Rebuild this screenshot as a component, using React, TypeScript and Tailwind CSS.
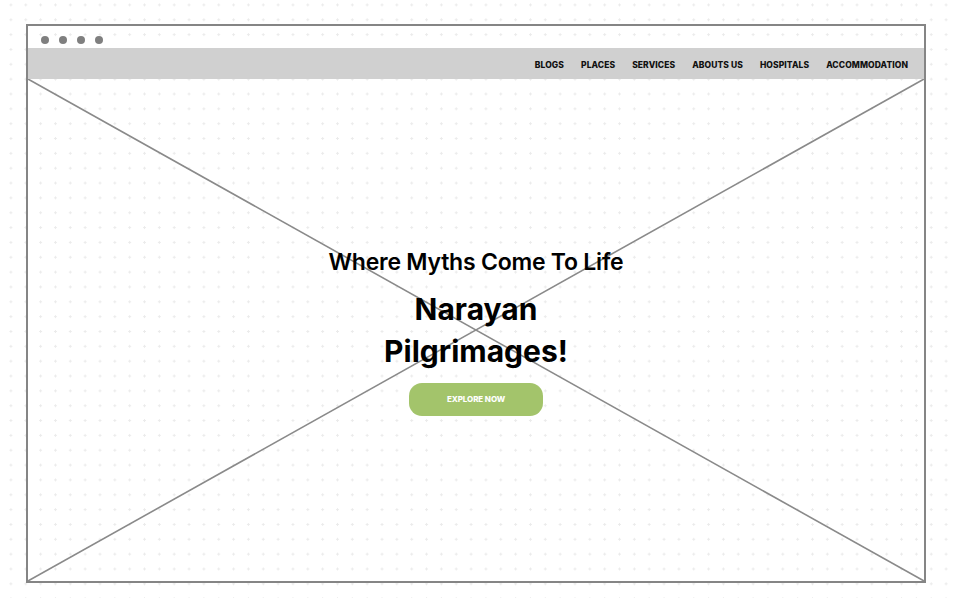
const navItems = ["Blogs", "Places", "Services", "Abouts Us", "Hospitals", "Accommodation"];

export default function App() {
  return (
    <div className="min-h-screen w-full bg-white bg-[radial-gradient(circle,#ebebeb_1px,transparent_1.3px)] bg-[size:14.85px_14.85px] bg-[position:3.5px_-2.5px] pt-[24px] pl-[26px] font-['Inter',sans-serif]">
      <div className="flex h-[559px] w-[900px] flex-col border-2 border-[#858585]">
        {/* window dots */}
        <div className="flex h-[22px] items-start gap-[10px] pl-[13px] pt-[10px]">
          {[0, 1, 2, 3].map((i) => (
            <span key={i} className="h-[8px] w-[8px] rounded-full bg-[#7f7f7f]" />
          ))}
        </div>

        {/* nav bar */}
        <nav className="flex h-[31px] items-center justify-end gap-[17px] bg-[#d0d0d0] pr-[16px] pt-[3px]">
          {navItems.map((item) => (
            <a
              key={item}
              className="text-[8.5px] font-extrabold uppercase tracking-[0.01em] text-[#111]"
            >
              {item}
            </a>
          ))}
        </nav>

        {/* hero placeholder */}
        <div className="relative flex flex-1 flex-col items-center justify-center pt-[2px]">
          <svg
            className="absolute inset-0 h-full w-full"
            viewBox="0 0 100 100"
            preserveAspectRatio="none"
          >
            <line x1="0" y1="0" x2="100" y2="100" stroke="#8a8a8a" strokeWidth="1.6" vectorEffect="non-scaling-stroke" />
            <line x1="0" y1="100" x2="100" y2="0" stroke="#8a8a8a" strokeWidth="1.6" vectorEffect="non-scaling-stroke" />
          </svg>

          <div className="relative flex flex-col items-center text-black">
            <h2 className="text-[23px] font-semibold leading-[30px] tracking-[-0.01em]">
              Where Myths Come To Life
            </h2>
            <h1 className="mt-[11px] text-center text-[30px] font-bold leading-[42px]">
              Narayan
              <br />
              Pilgrimages!
            </h1>
            <button className="mt-[11px] h-[33px] w-[134px] rounded-[13px] bg-[#a3c46b] text-[8px] font-extrabold uppercase tracking-[-0.01em] text-white">
              Explore Now
            </button>
          </div>
        </div>
      </div>
    </div>
  );
}
